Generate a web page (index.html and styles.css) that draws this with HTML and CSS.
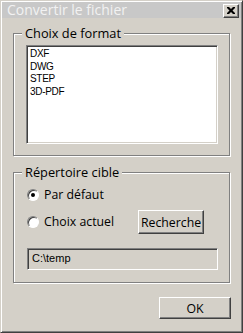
FILE: index.html
```html
<!DOCTYPE html>
<html lang="fr">
<head>
<meta charset="utf-8">
<title>Convertir le fichier</title>
<link rel="stylesheet" href="styles.css">
</head>
<body>
<div class="window">
  <div class="titlebar">
    <span class="title">Convertir le fichier</span>
    <span class="close"><svg width="8" height="7" viewBox="0 0 8 7"><path d="M0 0h2l2 2 2-2h2v1l-2.5 2.5L8 6v1H6L4 5 2 7H0V6l2.5-2.5L0 1z" fill="#000"/></svg></span>
  </div>
  <div class="content">
    <div class="group group-format">
      <span class="group-label">Choix de format</span>
      <div class="listbox">
        <div class="item">DXF</div>
        <div class="item">DWG</div>
        <div class="item">STEP</div>
        <div class="item">3D-PDF</div>
      </div>
    </div>
    <div class="group group-dir">
      <span class="group-label">Répertoire cible</span>
      <div class="radio-row first">
        <span class="radio checked"></span>
        <span class="radio-text">Par défaut</span>
      </div>
      <div class="radio-row second">
        <span class="radio"></span>
        <span class="radio-text">Choix actuel</span>
        <span class="button btn-search">Recherche</span>
      </div>
      <div class="textfield">C:\temp</div>
    </div>
    <div class="footer">
      <span class="button btn-ok">OK</span>
    </div>
  </div>
</div>
</body>
</html>
```
FILE: styles.css
```css
html, body {
  margin: 0;
  padding: 0;
  background: #d4d0c8;
}
.window {
  width: 243px;
  height: 333px;
  box-sizing: border-box;
  border: 1px solid;
  border-color: #d4d0c8 #404040 #404040 #d4d0c8;
  box-shadow: inset 1px 1px 0 #ffffff, inset -1px -1px 0 #808080;
  padding: 1px;
  background: #d4d0c8;
  display: flex;
  flex-direction: column;
  font-family: "Open Sans", "Noto Sans", sans-serif;
  color: #000;
}
.titlebar {
  height: 16px;
  background: #c8c8c8;
  display: flex;
  align-items: center;
  justify-content: space-between;
  padding: 0 2px 0 5px;
}
.title {
  font-size: 14px;
  color: #f2f2f2;
  line-height: 16px;
}
.close {
  width: 16px;
  height: 14px;
  box-sizing: border-box;
  background: #d4d0c8;
  border: 1px solid;
  border-color: #ffffff #404040 #404040 #ffffff;
  box-shadow: inset -1px -1px 0 #808080;
  display: flex;
  align-items: center;
  justify-content: center;
  margin-top: 2px;
}
.close svg { display: block; margin: 0 1px 1px 0; }
.content {
  display: flex;
  flex-direction: column;
  padding-left: 11px;
}
.group {
  position: relative;
  width: 217px;
  box-sizing: border-box;
  border: 1px solid #808080;
  box-shadow: inset 1px 1px 0 #ffffff, 1px 1px 0 #ffffff;
}
.group-label {
  position: absolute;
  top: -9px;
  left: 8px;
  padding: 0 3px;
  background: #d4d0c8;
  font-size: 12.8px;
  line-height: 16px;
}
.group-format {
  margin-top: 15px;
  height: 123px;
  padding: 11px 0 0 12px;
}
.listbox {
  width: 192px;
  height: 99px;
  box-sizing: border-box;
  background: #fff;
  border: 1px solid;
  border-color: #808080 #ffffff #ffffff #808080;
  box-shadow: inset 1px 1px 0 #404040, inset -1px -1px 0 #d4d0c8;
  padding: 2px 0 0 3px;
  font-family: "Liberation Sans", Arial, sans-serif;
  font-size: 10px;
  letter-spacing: -0.3px;
  line-height: 12.5px;
}
.group-dir {
  margin-top: 16px;
  height: 111px;
  padding: 0 0 0 13px;
}
.radio-row {
  display: flex;
  align-items: center;
  font-size: 12.3px;
}
.radio-row.first {
  margin-top: 15px;
  height: 14px;
}
.radio-row.second {
  margin-top: 8px;
  height: 24px;
}
.radio {
  width: 12px;
  height: 12px;
  box-sizing: border-box;
  border-radius: 50%;
  background: #fff;
  border: 1px solid;
  border-color: #808080 #ffffff #ffffff #808080;
  box-shadow: inset 1px 1px 0 #404040;
  display: flex;
  align-items: center;
  justify-content: center;
  flex: none;
}
.radio.checked::after {
  content: "";
  width: 4px;
  height: 4px;
  border-radius: 50%;
  background: #000;
}
.radio-text {
  margin-left: 5px;
  line-height: 14px;
}
.button {
  box-sizing: border-box;
  background: #d4d0c8;
  border: 1px solid;
  border-color: #ffffff #404040 #404040 #ffffff;
  box-shadow: inset -1px -1px 0 #808080;
  display: flex;
  align-items: center;
  justify-content: center;
  font-size: 12.3px;
}
.btn-search {
  width: 66px;
  height: 24px;
  margin-left: auto;
  margin-right: 25px;
}
.textfield {
  margin-top: 14px;
  width: 191px;
  height: 22px;
  box-sizing: border-box;
  border: 1px solid;
  border-color: #808080 #ffffff #ffffff #808080;
  box-shadow: inset 1px 1px 0 #404040, inset -1px -1px 0 #d4d0c8;
  font-family: "Liberation Sans", Arial, sans-serif;
  font-size: 11px;
  padding-left: 4px;
  line-height: 19px;
}
.footer {
  display: flex;
  justify-content: flex-end;
  padding-right: 10px;
  margin-top: 14px;
}
.btn-ok {
  width: 72px;
  height: 22px;
}
```
